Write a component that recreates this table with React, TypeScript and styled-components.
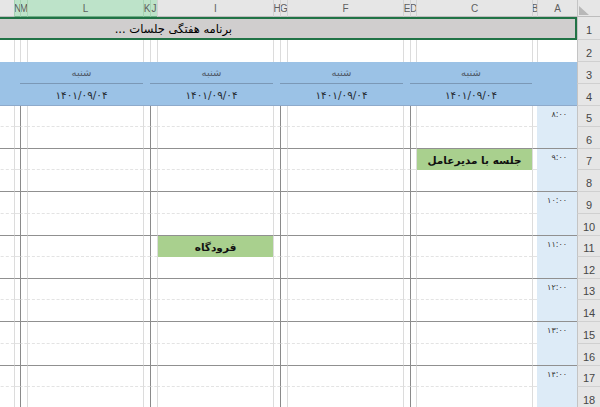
import React from 'react';
import styled, { createGlobalStyle } from 'styled-components';

// column widths, listed from the right edge (row header first, then A..O);
// the last column runs past the left edge of the window, as in the sheet
const COLS = [23, 40, 5, 116, 6, 7, 116, 7, 7, 116, 7, 7, 116, 7, 6, 60];
const TEMPLATE = COLS.map((c) => `${c}px`).join(' ');
const LETTERS = ['A', 'B', 'C', 'D', 'E', 'F', 'G', 'H', 'I', 'J', 'K', 'L', 'M', 'N', 'O'];
const SELECTED_HEADS = new Set(['J', 'K', 'L', 'M', 'N']);
const DARK_LEFT = new Set([4, 7, 10, 13]); // D, G, J, M
const BODY_HEIGHTS = [21, 22, 21, 22, 22, 22, 21, 22, 21, 22, 22, 22, 21, 22];
const TIMES: Record<number, string> = {
  5: '۸:۰۰',
  7: '۹:۰۰',
  9: '۱۰:۰۰',
  11: '۱۱:۰۰',
  13: '۱۲:۰۰',
  15: '۱۳:۰۰',
  17: '۱۴:۰۰',
};
const EVENTS: Record<string, string> = {
  '7-3': 'جلسه با مدیرعامل',
  '11-9': 'فرودگاه',
};
const DAY_GROUPS = [4, 7, 10, 13];
const DATE = '۱۴۰۱/۰۹/۰۴';

const GlobalStyle = createGlobalStyle`
  html, body { margin: 0; padding: 0; background: #ffffff; overflow: hidden; }
  #root { width: 600px; height: 407px; overflow: hidden; }
`;

const Sheet = styled.div`
  width: 600px;
  height: 407px;
  overflow: hidden;
  background: #ffffff;
  display: flex;
  flex-direction: column;
  font-family: "DejaVu Sans", "Noto Sans", sans-serif;
`;

const Row = styled.div<{ $h: number }>`
  display: grid;
  direction: rtl;
  grid-template-columns: ${TEMPLATE};
  height: ${(p) => p.$h}px;
  flex: none;
`;

const Corner = styled.div`
  background: #e6e6e6;
  border-bottom: 1px solid #bdbdbd;
  border-left: 1px solid #c4c4c4;
  box-sizing: border-box;
  display: flex;
  align-items: flex-end;
  justify-content: flex-end;
  padding: 0 0 1px 0;
`;

const CornerMark = styled.svg`
  display: block;
`;

const ColHead = styled.div<{ $sel?: boolean }>`
  box-sizing: border-box;
  background: ${(p) => (p.$sel ? '#bde3c9' : '#e6e6e6')};
  color: #5f5f5f;
  font: 10px "Liberation Sans", Arial, sans-serif;
  display: flex;
  align-items: center;
  justify-content: center;
  overflow: hidden;
  white-space: nowrap;
  border-left: 1px solid ${(p) => (p.$sel ? '#a6d3b4' : '#d3d3d3')};
  border-bottom: 1px solid ${(p) => (p.$sel ? '#6fae86' : '#bdbdbd')};
`;

const RowHead = styled.div`
  box-sizing: border-box;
  background: #e6e6e6;
  color: #474747;
  font: 11px "Liberation Sans", Arial, sans-serif;
  display: flex;
  align-items: center;
  justify-content: center;
  padding-top: 4px;
  border-bottom: 1px solid #d0d0d0;
  border-left: 1px solid #c4c4c4;
`;

const TitleCell = styled.div`
  grid-column: 2 / -1;
  box-sizing: border-box;
  background: #d0cece;
  border: 2px solid #217346;
  border-left: none;
  display: flex;
  align-items: center;
  justify-content: flex-start;
  padding-right: 343px;
  color: #000000;
  font-size: 11.5px;
  white-space: nowrap;
`;

const GridCell = styled.div<{ $left?: 'none' | 'light' | 'dark'; $bottom?: 'none' | 'dash' | 'solid'; $bg?: string }>`
  box-sizing: border-box;
  background: ${(p) => p.$bg || '#ffffff'};
  border-left: ${(p) =>
    p.$left === 'dark' ? '1px solid #8a8a8a' : p.$left === 'light' ? '1px solid #dcdcdc' : 'none'};
  border-bottom: ${(p) =>
    p.$bottom === 'solid' ? '1px solid #909090' : p.$bottom === 'dash' ? '1px dashed #e3e3e3' : 'none'};
  overflow: hidden;
  white-space: nowrap;
`;

const BandCell = styled.div<{ $span?: number; $start: number; $line?: boolean; $bottomEdge?: boolean }>`
  box-sizing: border-box;
  background: #9bc2e6;
  grid-column: ${(p) => `${p.$start} / span ${p.$span || 1}`};
  border-bottom: ${(p) => (p.$line ? '1px solid #7b98b6' : p.$bottomEdge ? '1px solid #8eaacb' : 'none')};
  display: flex;
  align-items: center;
  justify-content: center;
  overflow: hidden;
  white-space: nowrap;
`;

const DayName = styled.span`
  font-size: 10px;
  color: #4f5966;
`;

const DateText = styled.span`
  font-size: 10.5px;
  color: #252a31;
  letter-spacing: 0.8px;
`;

const TimeLabel = styled.div`
  font-size: 8px;
  color: #333333;
  text-align: right;
  padding: 4px 10px 0 0;
  letter-spacing: 0.3px;
`;

const EventCell = styled(GridCell)`
  display: flex;
  align-items: center;
  justify-content: center;
  font-size: 10.5px;
  font-weight: bold;
  color: #111111;
`;

function HeaderRow() {
  return (
    <Row $h={17}>
      <Corner>
        <CornerMark width="22" height="9" viewBox="0 0 22 9">
          <polygon points="1,0 1,9 11,9" fill="#b8b8b8" />
        </CornerMark>
      </Corner>
      {LETTERS.map((l) => (
        <ColHead key={l} $sel={SELECTED_HEADS.has(l)}>
          {l === 'O' ? null : l}
        </ColHead>
      ))}
    </Row>
  );
}

function TitleRow() {
  return (
    <Row $h={23}>
      <RowHead>1</RowHead>
      <TitleCell>برنامه هفتگی جلسات ...</TitleCell>
    </Row>
  );
}

function BlankRow() {
  return (
    <Row $h={22}>
      <RowHead>2</RowHead>
      {LETTERS.map((l) => (
        <GridCell key={l} $left="light" />
      ))}
    </Row>
  );
}

function BandRow({ n, kind }: { n: number; kind: 'day' | 'date' }) {
  const edge = kind === 'date';
  const cells: React.ReactNode[] = [
    <BandCell key="a" $start={2} $bottomEdge={edge} />,
    <BandCell key="b" $start={3} $bottomEdge={edge} />,
  ];
  DAY_GROUPS.forEach((start, gi) => {
    cells.push(
      <BandCell key={`g${gi}`} $start={start} $span={2} $line={kind === 'day'} $bottomEdge={edge}>
        {kind === 'day' ? <DayName>شنبه</DayName> : <DateText>{DATE}</DateText>}
      </BandCell>
    );
    cells.push(<BandCell key={`s${gi}`} $start={start + 2} $bottomEdge={edge} />);
  });
  cells.push(<BandCell key="o" $start={16} $bottomEdge={edge} />);
  return (
    <Row $h={22}>
      <RowHead>{n}</RowHead>
      {cells}
    </Row>
  );
}

function BodyRow({ n, h }: { n: number; h: number }) {
  const bottom: 'dash' | 'solid' = n % 2 === 0 ? 'solid' : 'dash';
  return (
    <Row $h={h}>
      <RowHead>{n}</RowHead>
      {LETTERS.map((l, idx0) => {
        const idx = idx0 + 1;
        if (idx === 1) {
          return (
            <GridCell key={l} $left="none" $bottom={bottom === 'solid' ? 'solid' : 'none'} $bg="#ddebf7">
              {TIMES[n] ? <TimeLabel>{TIMES[n]}</TimeLabel> : null}
            </GridCell>
          );
        }
        const left: 'light' | 'dark' = DARK_LEFT.has(idx) ? 'dark' : 'light';
        const ev = EVENTS[`${n}-${idx}`];
        if (ev) {
          return (
            <EventCell key={l} $left={left} $bottom={bottom === 'solid' ? 'solid' : 'none'} $bg="#a9d08e">
              {ev}
            </EventCell>
          );
        }
        return <GridCell key={l} $left={left} $bottom={bottom} />;
      })}
    </Row>
  );
}

export default function App() {
  return (
    <>
      <GlobalStyle />
      <Sheet>
        <HeaderRow />
        <TitleRow />
        <BlankRow />
        <BandRow n={3} kind="day" />
        <BandRow n={4} kind="date" />
        {BODY_HEIGHTS.map((h, i) => (
          <BodyRow key={i} n={i + 5} h={h} />
        ))}
      </Sheet>
    </>
  );
}
